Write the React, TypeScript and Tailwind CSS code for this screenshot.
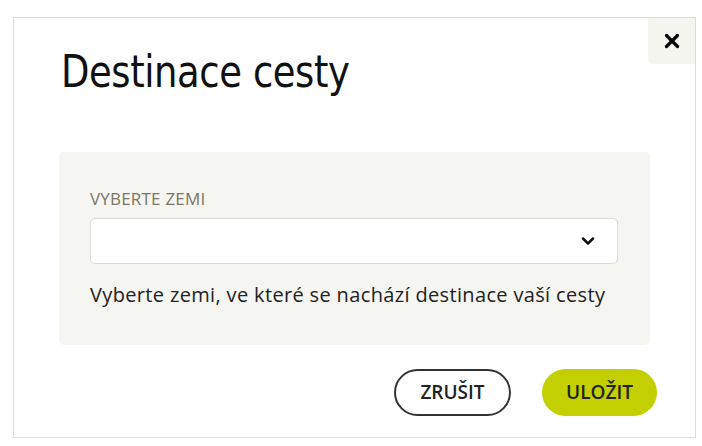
import React from 'react';
import { X, ChevronDown } from 'lucide-react';

export default function App() {
  return (
    <div className="w-[702px] h-[446px] bg-white pt-[17px] pl-[13px]" style={{ fontFamily: '"Open Sans", "Noto Sans", sans-serif' }}>
      <div className="relative w-[683px] h-[421px] border border-[#dcdcdc] bg-white">
        <button className="absolute top-0 right-0 w-[47px] h-[46px] bg-[#f5f5f0] rounded-bl-[6px] flex items-center justify-center">
          <X className="w-[22px] h-[22px] text-black" strokeWidth={3.5} />
        </button>

        <div className="pl-[47px] pt-[28px] h-[82px]">
          <h1
            className="inline-block origin-left [transform:scaleX(0.84)] text-[44px] leading-[52px] text-[#111] tracking-[-0.5px]"
            style={{ fontFamily: '"DejaVu Sans", sans-serif' }}
          >
            Destinace cesty
          </h1>
        </div>

        <div className="mx-[45px] mt-[52px] h-[193px] bg-[#f5f5f1] rounded-[5px] px-[31px] pt-[37px]">
          <div className="text-[17px] leading-[20px] text-[#7b7568] uppercase tracking-[0.2px]">Vyberte zemi</div>
          <div className="mt-[9px] h-[46px] w-[528px] bg-white border border-[#dedcd2] rounded-[5px] flex items-center justify-end pr-[19px]">
            <ChevronDown className="w-[20px] h-[20px] text-[#111]" strokeWidth={3} />
          </div>
          <p className="mt-[17px] text-[20px] leading-[28px] text-[#222] tracking-[0.35px]">
            Vyberte zemi, ve které se nachází destinace vaší cesty
          </p>
        </div>

        <div className="flex justify-end gap-[31px] pr-[38px] mt-[24px]">
          <button className="w-[117px] h-[47px] rounded-full border-2 border-[#333] text-[19px] font-semibold text-[#222]">
            ZRUŠIT
          </button>
          <button className="w-[115px] h-[47px] rounded-full bg-[#c3cf00] text-[19px] font-semibold text-[#222]">
            ULOŽIT
          </button>
        </div>
      </div>
    </div>
  );
}
